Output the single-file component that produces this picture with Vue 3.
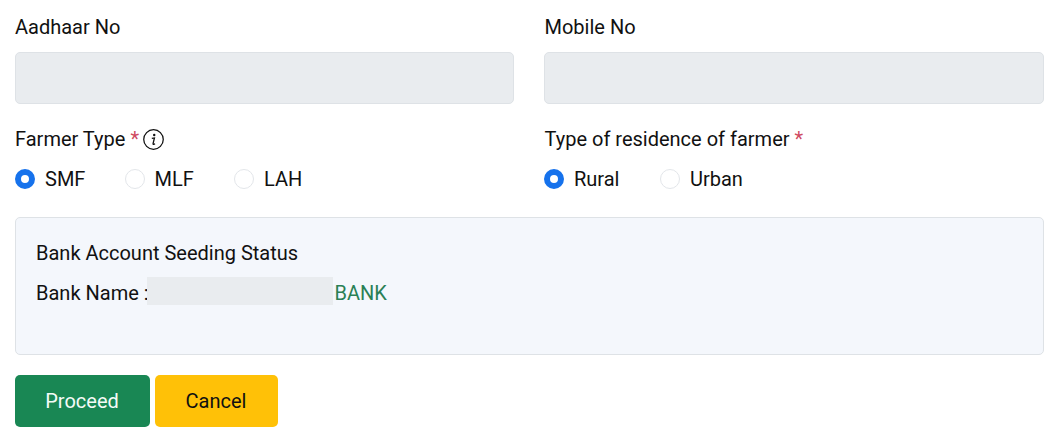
<script setup>
const farmerTypes = [
  { label: 'SMF', checked: true },
  { label: 'MLF', checked: false },
  { label: 'LAH', checked: false }
]
const residence = [
  { label: 'Rural', checked: true },
  { label: 'Urban', checked: false }
]
</script>

<template>
  <div class="page">
    <div class="grid">
      <div class="field">
        <label class="lbl">Aadhaar No</label>
        <div class="input"></div>
      </div>
      <div class="field right">
        <label class="lbl">Mobile No</label>
        <div class="input"></div>
      </div>
      <div class="field choice">
        <label class="lbl">
          Farmer Type <span class="req">*</span>
          <svg class="info" viewBox="0 0 20 20" width="21" height="21">
            <circle cx="10" cy="10" r="9.3" fill="none" stroke="#111" stroke-width="1.2" />
            <circle cx="10.7" cy="5.7" r="1.15" fill="#111" />
            <path d="M8.4 8.9 L10.9 8.5 L9.6 13.8 Q9.4 14.8 10.3 14.6 L11.5 14" fill="none" stroke="#111" stroke-width="1.2" />
          </svg>
        </label>
        <div class="radios">
          <span v-for="r in farmerTypes" :key="r.label" class="radio-item ft">
            <span class="radio" :class="{ on: r.checked }"></span>{{ r.label }}
          </span>
        </div>
      </div>
      <div class="field choice right">
        <label class="lbl">Type of residence of farmer <span class="req">*</span></label>
        <div class="radios">
          <span v-for="r in residence" :key="r.label" class="radio-item res">
            <span class="radio" :class="{ on: r.checked }"></span>{{ r.label }}
          </span>
        </div>
      </div>
    </div>

    <div class="panel">
      <div class="panel-title">Bank Account Seeding Status</div>
      <div class="bank"><span class="bank-text">Bank Name :</span><span class="mask"></span><span class="bank-text bank-name">BANK</span></div>
    </div>

    <div class="actions">
      <button class="btn proceed">Proceed</button>
      <button class="btn cancel">Cancel</button>
    </div>
  </div>
</template>

<style>
body { margin: 0; background: #fff; }
</style>

<style scoped>
.page {
  width: 1050px;
  height: 432px;
  box-sizing: border-box;
  padding: 15px 6px 0 15px;
  font-family: Roboto, "Liberation Sans", sans-serif;
  font-size: 20px;
  line-height: 24px;
  color: #111;
  overflow: hidden;
}
.grid {
  display: grid;
  grid-template-columns: 499px 500px;
  column-gap: 30px;
}
.field { display: flex; flex-direction: column; }
.lbl { display: block; height: 24px; white-space: nowrap; }
.right .lbl { padding-left: 0.5px; }
.input {
  margin-top: 13px;
  height: 50px;
  background: #e9ecef;
  border: 1px solid #dee2e6;
  border-radius: 5px;
}
.choice { margin-top: 23px; }
.req { color: #cf4a62; }
.info { margin-left: 4px; vertical-align: -4px; }
.radios { display: flex; margin-top: 16px; }
.radio-item { display: flex; align-items: center; }
.radio-item.ft { width: 109.5px; }
.radio-item.res { width: 116px; }
.radio {
  width: 20px;
  height: 20px;
  box-sizing: border-box;
  border: 1px solid #e3e6ea;
  border-radius: 50%;
  margin-right: 10px;
  background: #fff;
}
.radio.on { border: 6px solid #1672ec; }
.panel {
  margin-top: 26px;
  width: 1029px;
  height: 138px;
  box-sizing: border-box;
  padding: 23px 20px 0;
  background: #f4f7fc;
  border: 1px solid #dee2e6;
  border-radius: 5px;
}
.panel-title { height: 24px; }
.bank { display: flex; align-items: flex-start; margin-top: 11px; height: 30px; }
.bank-text { padding-top: 5px; }
.mask { width: 186px; height: 28px; margin-top: 1px; background: #e9ecef; margin-left: -2px; }
.bank-name { color: #2a8055; margin-left: 2px; }
.actions { display: flex; gap: 5px; margin-top: 20px; }
.btn {
  height: 52px;
  border: 0;
  border-radius: 5px;
  font: inherit;
  padding: 0 1px 0 0;
}
.proceed { width: 135px; background: #198754; color: #f4fbf7; }
.cancel { width: 123px; background: #ffc107; color: #111; }
</style>
